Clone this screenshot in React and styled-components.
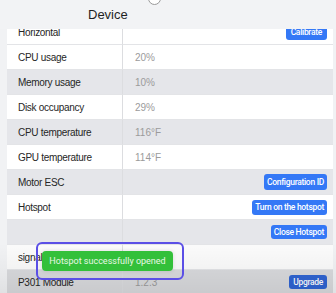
import React from "react";
import styled, { createGlobalStyle } from "styled-components";

const Global = createGlobalStyle`
  html, body { margin: 0; padding: 0; background: #f1f2f4; overflow: hidden; }
  * { box-sizing: border-box; }
`;

const Page = styled.div`
  position: relative;
  width: 336px;
  height: 293px;
  overflow: hidden;
  background: #f1f2f4;
  font-family: "Liberation Sans", Arial, sans-serif;
`;

const Header = styled.header`
  position: absolute;
  top: 0;
  left: 0;
  right: 0;
  height: 29px;
  z-index: 2;
  display: flex;
  align-items: center;
  padding-left: 88px;
  background: #f2f3f5;
`;

const Title = styled.h1`
  margin: 0;
  font-size: 13px;
  font-weight: 400;
  color: #1f1f1f;
`;

const Knob = styled.span`
  position: absolute;
  left: 148px;
  top: -8px;
  width: 13px;
  height: 13px;
  border-radius: 50%;
  background: #fff;
  border: 1px solid #9a9a9a;
`;

const Content = styled.main`
  padding: 20px 3px 0 7px;
`;

const Table = styled.div`
  display: grid;
  grid-template-columns: 116px 1fr;
  background: #fff;
`;

const Row = styled.div`
  display: contents;
  & > * {
    height: 25px;
    border-bottom: 1px solid #e3e4e7;
    background: ${(p) => p.$bg};
  }
`;

const Label = styled.div`
  display: flex;
  align-items: center;
  padding-left: 11px;
  font-size: 10px;
  letter-spacing: -0.3px;
  color: #262626;
  border-right: 1px solid #dcdde0;
  white-space: nowrap;
`;

const Value = styled.div`
  display: flex;
  align-items: center;
  justify-content: ${(p) => (p.$action ? "flex-end" : "flex-start")};
  padding: 0 6px 0 12px;
  font-size: 10px;
  color: #9b9b9b;
`;

const Spacer = styled.span`
  flex: 1;
`;

const Button = styled.button`
  height: ${(p) => p.$h || 15}px;
  padding: 0 ${(p) => p.$px ?? 3}px;
  border: none;
  border-radius: 3px;
  background: ${(p) => p.$bg || "#3478f6"};
  color: #fff;
  font-family: Roboto, "Liberation Sans", sans-serif;
  font-weight: 500;
  font-size: 8.5px;
  letter-spacing: -0.3px;
  line-height: 1;
  white-space: nowrap;
  cursor: pointer;
`;

const Dim = styled.div`
  position: absolute;
  left: 0;
  right: 0;
  bottom: 0;
  height: 50px;
  pointer-events: none;
  background: linear-gradient(to bottom, rgba(0, 0, 0, 0) 0%, rgba(0, 0, 0, 0.03) 50%, rgba(0, 0, 0, 0.07) 100%);
`;

const Highlight = styled.div`
  position: absolute;
  left: 36px;
  top: 242px;
  width: 148px;
  height: 38px;
  border: 2.5px solid #5b4fe6;
  border-radius: 6px;
  display: flex;
  align-items: center;
  padding-left: 4px;
`;

const Toast = styled.div`
  width: 131px;
  height: 20px;
  border-radius: 4px;
  background: #33c03a;
  color: #e9f7e6;
  font-family: Roboto, "Liberation Sans", sans-serif;
  font-size: 9px;
  display: flex;
  align-items: center;
  justify-content: center;
  box-shadow: 0 0 4px rgba(0, 0, 0, 0.12);
`;

const rows = [
  { label: "Horizontal", bg: "#fff", btn: "Calibrate", px: 5 },
  { label: "CPU usage", bg: "#fff", value: "20%" },
  { label: "Memory usage", bg: "#e5e6ea", value: "10%" },
  { label: "Disk occupancy", bg: "#fff", value: "29%" },
  { label: "CPU temperature", bg: "#e5e6ea", value: "116°F" },
  { label: "GPU temperature", bg: "#fff", value: "114°F" },
  { label: "Motor ESC", bg: "#e5e6ea", btn: "Configuration ID", h: 16 },
  { label: "Hotspot", bg: "#fff", btn: "Turn on the hotspot" },
  { label: "", bg: "#e5e6ea", btn: "Close Hotspot", h: 14 },
  { label: "signal", bg: "#fbfbfb" },
  { label: "P301 Module", bg: "#d9dadd", value: "1.2.3", btn: "Upgrade", h: 14, px: 4, btnBg: "#2f64d2" },
];

export default function App() {
  return (
    <Page>
      <Global />
      <Header>
        <Knob />
        <Title>Device</Title>
      </Header>
      <Content>
        <Table>
          {rows.map((r, i) => (
            <Row key={i} $bg={r.bg}>
              <Label>{r.label}</Label>
              <Value $action={!!r.btn && !r.value}>
                {r.value}
                {r.btn && r.value ? <Spacer /> : null}
                {r.btn && (
                  <Button $h={r.h} $px={r.px} $bg={r.btnBg}>
                    {r.btn}
                  </Button>
                )}
              </Value>
            </Row>
          ))}
        </Table>
      </Content>
      <Dim />
      <Highlight>
        <Toast>Hotspot successfully opened</Toast>
      </Highlight>
    </Page>
  );
}
